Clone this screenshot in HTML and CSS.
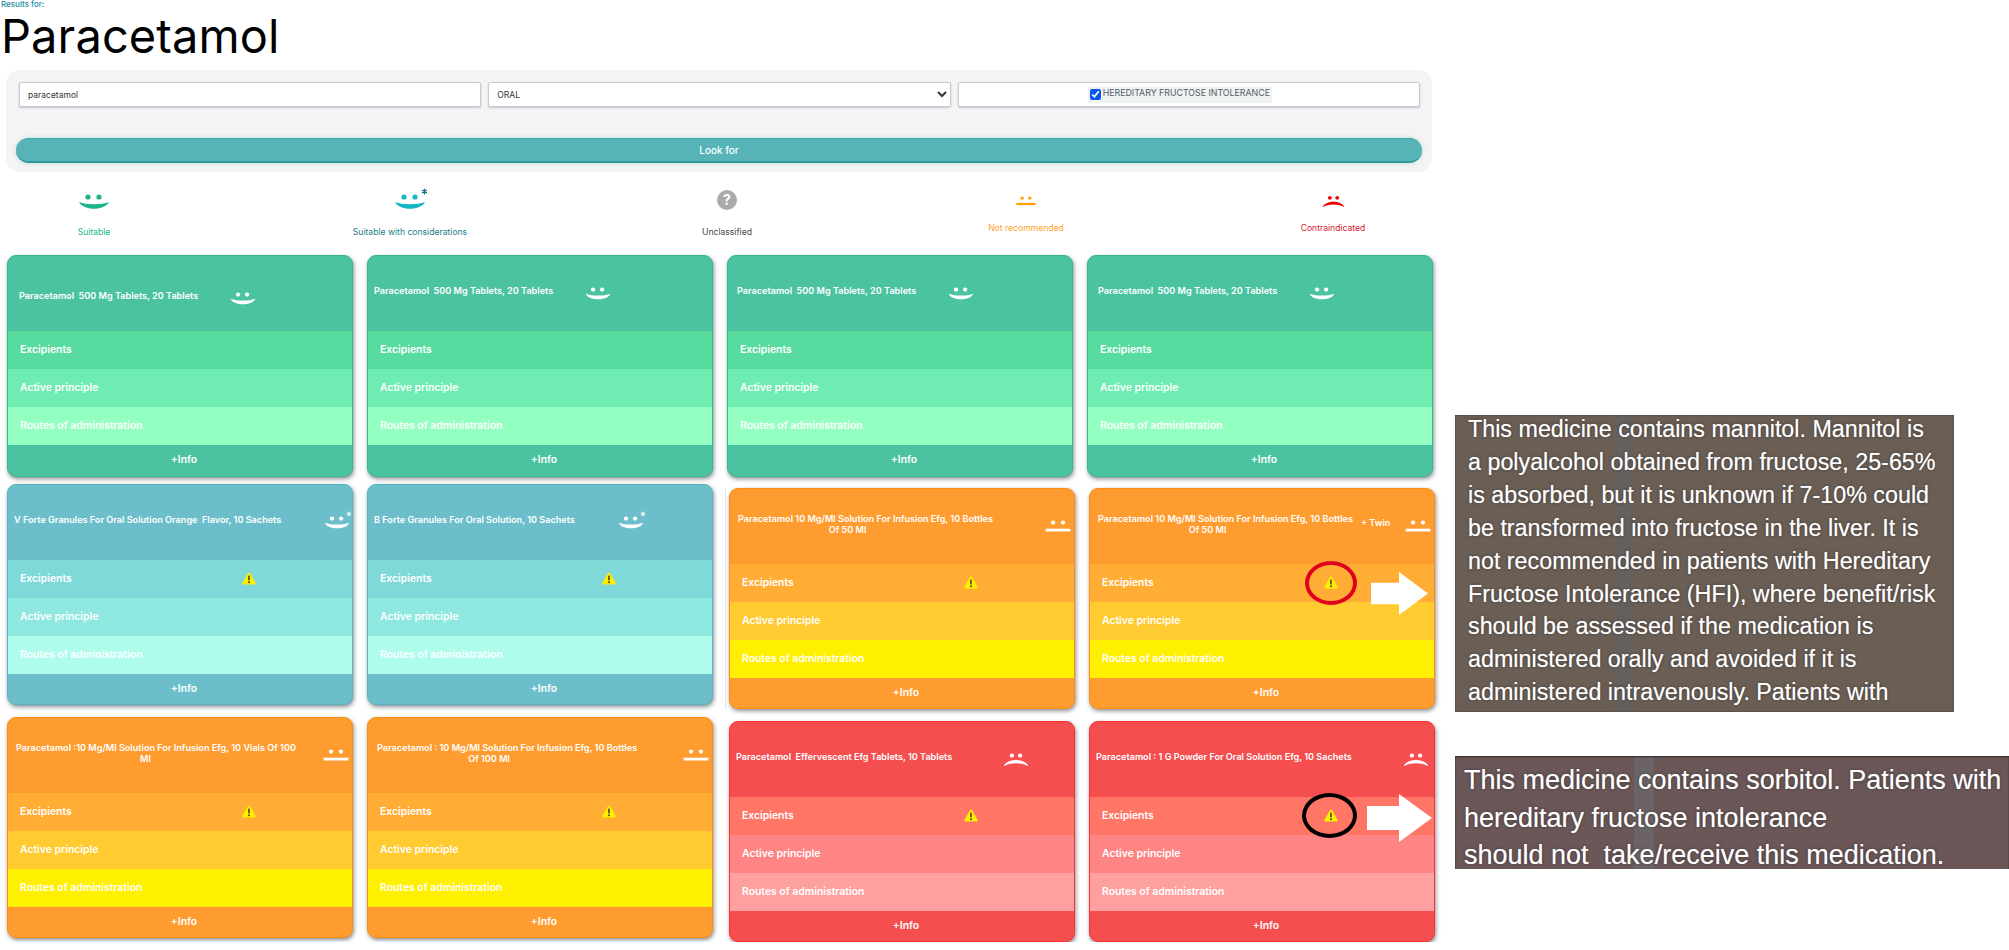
FILE: index.html
```html
<!DOCTYPE html>
<html lang="en">

<head>
    <meta charset="UTF-8">
    <meta name="viewport" content="width=device-width, initial-scale=1.0">
    <title>Results for Paracetamol</title>
    <link rel="stylesheet" href="styles.css">
</head>

<body>
    <svg class="defs" width="0" height="0">
        <symbol id="face-smile" viewBox="-2 -6 34 24">
            <circle cx="9" cy="3" r="2.6" fill="currentColor"/><circle cx="20" cy="3" r="2.6" fill="currentColor"/>
            <path d="M0 8C8 11 22 11 30 8C26 17 4 17 0 8Z" fill="currentColor"/>
        </symbol>
        <symbol id="face-star" viewBox="-2 -6 34 24">
            <circle cx="9" cy="3" r="2.6" fill="currentColor"/><circle cx="20" cy="3" r="2.6" fill="currentColor"/>
            <path d="M0 8C8 11 22 11 30 8C26 17 4 17 0 8Z" fill="currentColor"/>
            <path d="M29.5-5.5V.5M27-4L32-1M27-1L32-4" stroke-width="1.2" class="star"/>
        </symbol>
        <symbol id="face-flat" viewBox="-2 -6 34 24">
            <circle cx="9" cy="3" r="2.6" fill="currentColor"/><circle cx="21" cy="3" r="2.6" fill="currentColor"/>
            <rect x="0" y="10.5" width="30" height="3.4" fill="currentColor"/>
        </symbol>
        <symbol id="face-sad" viewBox="-2 -6 34 24">
            <circle cx="10" cy="3" r="2.6" fill="currentColor"/><circle cx="20" cy="3" r="2.6" fill="currentColor"/>
            <path d="M0 16C4 6 26 6 30 16C22 11 8 11 0 16Z" fill="currentColor"/>
        </symbol>
        <symbol id="warning" viewBox="0 0 14 13">
            <path d="M7 1.6L12.6 11.4H1.4Z" fill="#ffee00" stroke="#ffee00" stroke-width="2.2" stroke-linejoin="round"/>
            <rect x="6.2" y="3.6" width="1.6" height="4.8" fill="#4a4a2a"/><circle cx="7" cy="10.2" r="1" fill="#4a4a2a"/>
        </symbol>
        <symbol id="arrow" viewBox="0 0 65 48" preserveAspectRatio="none">
            <path d="M0 12H32V0L65 24L32 48V36H0Z" fill="#fff"/>
        </symbol>
    </svg>

    <div class="page">
        <main class="content">
            <p class="results-for">Results for:</p>
            <h1>Paracetamol</h1>

            <form class="search">
                <div class="search-fields">
                    <input class="field" type="text" value="paracetamol">
                    <select class="field field-select">
                        <option>ORAL</option>
                    </select>
                    <div class="field field-check">
                        <label class="check-label"><input type="checkbox" checked><span>HEREDITARY FRUCTOSE INTOLERANCE</span></label>
                    </div>
                </div>
                <button class="look-for" type="button">Look for</button>
            </form>

            <div class="legend">
                <div class="legend-item suitable">
                    <svg class="legend-icon"><use href="#face-smile"/></svg>
                    <span>Suitable</span>
                </div>
                <div class="legend-item considerations">
                    <svg class="legend-icon"><use href="#face-star"/></svg>
                    <span>Suitable with considerations</span>
                </div>
                <div class="legend-item unclassified">
                    <div class="legend-icon"><span class="question">?</span></div>
                    <span>Unclassified</span>
                </div>
                <div class="legend-item not-recommended">
                    <svg class="legend-icon"><use href="#face-flat"/></svg>
                    <span>Not recommended</span>
                </div>
                <div class="legend-item contraindicated">
                    <svg class="legend-icon"><use href="#face-sad"/></svg>
                    <span>Contraindicated</span>
                </div>
            </div>

            <div class="results">
                <div class="half half-left">
                    <div class="card-row row-1">
                        <article class="card green">
                            <div class="card-head"><span class="card-title">Paracetamol&nbsp; 500 Mg Tablets, 20 Tablets</span><svg class="face"><use href="#face-smile"/></svg></div>
                            <div class="card-line line-a">Excipients</div>
                            <div class="card-line line-b">Active principle</div>
                            <div class="card-line line-c">Routes of administration</div>
                            <div class="card-foot">+Info</div>
                        </article>
                        <article class="card green">
                            <div class="card-head"><span class="card-title">Paracetamol&nbsp; 500 Mg Tablets, 20 Tablets</span><svg class="face"><use href="#face-smile"/></svg></div>
                            <div class="card-line line-a">Excipients</div>
                            <div class="card-line line-b">Active principle</div>
                            <div class="card-line line-c">Routes of administration</div>
                            <div class="card-foot">+Info</div>
                        </article>
                    </div>
                    <div class="card-row row-2">
                        <article class="card blue">
                            <div class="card-head"><span class="card-title">V Forte Granules For Oral Solution Orange&nbsp; Flavor, 10 Sachets</span><svg class="face"><use href="#face-star"/></svg></div>
                            <div class="card-line line-a">Excipients<span class="warn"><svg class="warn-icon"><use href="#warning"/></svg></span></div>
                            <div class="card-line line-b">Active principle</div>
                            <div class="card-line line-c">Routes of administration</div>
                            <div class="card-foot">+Info</div>
                        </article>
                        <article class="card blue">
                            <div class="card-head"><span class="card-title">B Forte Granules For Oral Solution, 10 Sachets</span><svg class="face"><use href="#face-star"/></svg></div>
                            <div class="card-line line-a">Excipients<span class="warn"><svg class="warn-icon"><use href="#warning"/></svg></span></div>
                            <div class="card-line line-b">Active principle</div>
                            <div class="card-line line-c">Routes of administration</div>
                            <div class="card-foot">+Info</div>
                        </article>
                    </div>
                    <div class="card-row row-3">
                        <article class="card orange">
                            <div class="card-head"><span class="card-title">Paracetamol :10 Mg/Ml Solution For Infusion Efg, 10 Vials Of 100<span class="second-line short">Ml</span></span><svg class="face"><use href="#face-flat"/></svg></div>
                            <div class="card-line line-a">Excipients<span class="warn"><svg class="warn-icon"><use href="#warning"/></svg></span></div>
                            <div class="card-line line-b">Active principle</div>
                            <div class="card-line line-c">Routes of administration</div>
                            <div class="card-foot">+Info</div>
                        </article>
                        <article class="card orange">
                            <div class="card-head"><span class="card-title">Paracetamol : 10 Mg/Ml Solution For Infusion Efg, 10 Bottles<span class="second-line">Of 100 Ml</span></span><svg class="face"><use href="#face-flat"/></svg></div>
                            <div class="card-line line-a">Excipients<span class="warn"><svg class="warn-icon"><use href="#warning"/></svg></span></div>
                            <div class="card-line line-b">Active principle</div>
                            <div class="card-line line-c">Routes of administration</div>
                            <div class="card-foot">+Info</div>
                        </article>
                    </div>
                </div>

                <div class="half half-right">
                    <div class="card-row row-1">
                        <article class="card green">
                            <div class="card-head"><span class="card-title">Paracetamol&nbsp; 500 Mg Tablets, 20 Tablets</span><svg class="face"><use href="#face-smile"/></svg></div>
                            <div class="card-line line-a">Excipients</div>
                            <div class="card-line line-b">Active principle</div>
                            <div class="card-line line-c">Routes of administration</div>
                            <div class="card-foot">+Info</div>
                        </article>
                        <article class="card green">
                            <div class="card-head"><span class="card-title">Paracetamol&nbsp; 500 Mg Tablets, 20 Tablets</span><svg class="face"><use href="#face-smile"/></svg></div>
                            <div class="card-line line-a">Excipients</div>
                            <div class="card-line line-b">Active principle</div>
                            <div class="card-line line-c">Routes of administration</div>
                            <div class="card-foot">+Info</div>
                        </article>
                    </div>
                    <div class="card-row row-2">
                        <article class="card orange">
                            <div class="card-head"><span class="card-title">Paracetamol 10 Mg/Ml Solution For Infusion Efg, 10 Bottles<span class="second-line">Of 50 Ml</span></span><svg class="face"><use href="#face-flat"/></svg></div>
                            <div class="card-line line-a">Excipients<span class="warn"><svg class="warn-icon"><use href="#warning"/></svg></span></div>
                            <div class="card-line line-b">Active principle</div>
                            <div class="card-line line-c">Routes of administration</div>
                            <div class="card-foot">+Info</div>
                        </article>
                        <article class="card orange">
                            <div class="card-head"><span class="card-title">Paracetamol 10 Mg/Ml Solution For Infusion Efg, 10 Bottles<span class="second-line">Of 50 Ml</span></span><span class="twin">+ Twin</span><svg class="face"><use href="#face-flat"/></svg></div>
                            <div class="card-line line-a">Excipients<span class="warn"><svg class="warn-icon"><use href="#warning"/></svg><span class="ring ring-red"></span></span><svg class="callout callout-orange"><use href="#arrow"/></svg></div>
                            <div class="card-line line-b">Active principle</div>
                            <div class="card-line line-c">Routes of administration</div>
                            <div class="card-foot">+Info</div>
                        </article>
                    </div>
                    <div class="card-row row-3">
                        <article class="card red">
                            <div class="card-head"><span class="card-title">Paracetamol&nbsp; Effervescent Efg Tablets, 10 Tablets</span><svg class="face"><use href="#face-sad"/></svg></div>
                            <div class="card-line line-a">Excipients<span class="warn"><svg class="warn-icon"><use href="#warning"/></svg></span></div>
                            <div class="card-line line-b">Active principle</div>
                            <div class="card-line line-c">Routes of administration</div>
                            <div class="card-foot">+Info</div>
                        </article>
                        <article class="card red">
                            <div class="card-head"><span class="card-title">Paracetamol : 1 G Powder For Oral Solution Efg, 10 Sachets</span><svg class="face"><use href="#face-sad"/></svg></div>
                            <div class="card-line line-a">Excipients<span class="warn"><svg class="warn-icon"><use href="#warning"/></svg><span class="ring ring-black"></span></span><svg class="callout callout-red"><use href="#arrow"/></svg></div>
                            <div class="card-line line-b">Active principle</div>
                            <div class="card-line line-c">Routes of administration</div>
                            <div class="card-foot">+Info</div>
                        </article>
                    </div>
                </div>
            </div>
        </main>

        <aside class="notes">
            <div class="note note-mannitol">
                <p>This medicine contains mannitol. Mannitol is<br>a polyalcohol obtained from fructose, 25-65%<br>is absorbed, but it is unknown if 7-10% could<br>be transformed into fructose in the liver. It is<br>not recommended in patients with Hereditary<br>Fructose Intolerance (HFI), where benefit/risk<br>should be assessed if the medication is<br>administered orally and avoided if it is<br>administered intravenously. Patients with</p>
            </div>
            <div class="note note-sorbitol">
                <p>This medicine contains sorbitol. Patients with<br>hereditary fructose intolerance<br>should not&nbsp; take/receive this medication.</p>
            </div>
        </aside>
    </div>
</body>

</html>
```

FILE: styles.css
```css
body {
    margin: 0;
    padding: 0;
    font-family: "Inter", "Liberation Sans", sans-serif;
    background: #fff;
    overflow: hidden;
}

.defs {
    position: absolute;
}

.page {
    display: flex;
}

.content {
    width: 1440px;
    flex: none;
}

.results-for {
    margin: 0;
    padding-left: 1px;
    font-size: 8px;
    line-height: 9px;
    font-weight: 500;
    color: #178fa0;
}

h1 {
    margin: 4px 0 0 1px;
    font-size: 47px;
    line-height: 46px;
    font-weight: 400;
    color: #000;
    letter-spacing: 0.1px;
}

/* search */
.search {
    margin: 11px 0 0 6px;
    width: 1426px;
    height: 102px;
    box-sizing: border-box;
    padding: 12px 10px 0;
    background: #f4f4f4;
    border-radius: 14px;
}

.search-fields {
    display: grid;
    grid-template-columns: repeat(3, 1fr);
    gap: 7px;
    padding: 0 2px 0 3px;
}

.field {
    min-width: 0;
    height: 25px;
    box-sizing: border-box;
    padding: 0 8px;
    border: 1px solid #c3ccd6;
    border-radius: 2px;
    background: #fff;
    box-shadow: 0 1px 2px rgba(120, 130, 150, 0.4);
    font-family: inherit;
    font-size: 8.5px;
    color: #333;
}

.field-select {
    padding: 0 4px;
}

.field-check {
    display: flex;
    justify-content: center;
    padding: 0 18px 0 0;
}

.check-label {
    display: flex;
    align-items: flex-start;
    gap: 2px;
    height: 16px;
    margin-top: 4px;
    padding: 0 2px;
    background: #eff2f2;
    font-size: 8.8px;
    line-height: 11px;
    color: #555b66;
}

.check-label input {
    width: 11px;
    height: 11px;
    margin: 2px 0 0;
    accent-color: #0a55f0;
}

.look-for {
    display: block;
    width: 100%;
    height: 25px;
    margin-top: 31px;
    border: 0;
    border-bottom: 2px solid #2f9c9e;
    border-top: 1px solid #3ea7a8;
    border-radius: 13px;
    background: #56b4b6;
    color: #fff;
    font-family: inherit;
    font-size: 10px;
    font-weight: 500;
    box-shadow: 0 0 4px rgba(90, 180, 180, 0.4);
}

/* legend */
.legend {
    display: grid;
    grid-template-columns: 188px 444px 190px 408px 206px;
    padding-top: 16px;
    height: 67px;
    box-sizing: content-box;
    font-size: 8.6px;
    line-height: 12px;
    text-align: center;
}

.legend-item {
    display: flex;
    flex-direction: column;
    align-items: center;
}

.legend-icon {
    display: block;
    width: 34px;
    height: 24px;
    margin-bottom: 14px;
}

.star {
    stroke: var(--star, currentColor);
}

.suitable {
    color: #20b48c;
}

.considerations {
    color: #177c8c;
}

.considerations .legend-icon {
    color: #16b6c6;
    --star: #14707f;
}

.unclassified {
    color: #40464c;
}

.question {
    display: block;
    width: 20px;
    height: 20px;
    margin: 2px auto 0;
    border-radius: 50%;
    background: #aaa;
    color: #fff;
    font-size: 14px;
    line-height: 20px;
    font-weight: 700;
}

.not-recommended {
    color: #ffa21f;
}

.not-recommended .legend-icon {
    width: 22px;
    margin-bottom: 10px;
    color: #ffa000;
}

.contraindicated {
    color: #d6202e;
}

.contraindicated .legend-icon {
    width: 25px;
    margin-bottom: 10px;
    color: #f00000;
}

/* cards */
.results {
    display: flex;
}

.half {
    display: flex;
    flex-direction: column;
}

.half-left {
    width: 725px;
    flex: none;
    padding-left: 7px;
    box-sizing: border-box;
}

.card-row {
    display: flex;
    gap: 14px;
}

.half-left .row-2 {
    margin-top: 7px;
}

.half-left .row-3 {
    margin-top: 12px;
}

.half-right .row-1 {
    padding-left: 2px;
}

.half-right .row-2 {
    margin-top: 11px;
    padding-left: 3px;
    border-left: 1px solid #e2e6ea;
}

.half-right .row-3 {
    margin-top: 12px;
    padding-left: 4px;
}

.card {
    width: 346px;
    height: 222px;
    box-sizing: border-box;
    border: 1px solid;
    border-radius: 9px;
    overflow: hidden;
    color: #fff;
    font-weight: 600;
    box-shadow: 1px 2px 4px rgba(40, 50, 60, 0.55);
}

.row-2 .card,
.row-3 .card {
    height: 221px;
}

.card-head {
    display: flex;
    align-items: center;
    height: 75px;
    box-sizing: border-box;
    padding: 0 0 4px 6px;
}

.card-title {
    display: block;
    font-size: 9.1px;
    line-height: 10.5px;
    text-align: center;
    white-space: nowrap;
}

.second-line {
    display: block;
    padding-right: 36px;
}

.second-line.short {
    padding-right: 21px;
}

.twin {
    margin: -4px 0 0 8px;
    font-size: 9.1px;
    white-space: nowrap;
}

.face {
    flex: none;
    width: 28px;
    height: 20px;
}

.card-line {
    display: grid;
    grid-template-columns: 222px 14px;
    align-items: center;
    position: relative;
    height: 38px;
    box-sizing: border-box;
    padding: 0 0 1px 12px;
    font-size: 10.4px;
}

/* ring and arrow on this line run over the next one */
.line-a {
    z-index: 1;
}

.card-foot {
    height: 31px;
    padding-left: 8px;
    font-size: 10.4px;
    line-height: 30px;
    text-align: center;
}

.warn {
    position: relative;
    display: block;
    width: 14px;
    height: 13px;
}

.warn-icon {
    display: block;
    width: 14px;
    height: 13px;
}

.ring {
    position: absolute;
    border: 4px solid;
    border-radius: 50%;
    box-sizing: border-box;
}

.ring-red {
    left: -19px;
    top: -15px;
    width: 52px;
    height: 44px;
    border-color: #e0001f;
}

.ring-black {
    left: -22px;
    top: -16px;
    width: 55px;
    height: 45px;
    border-color: #000;
}

.callout {
    position: absolute;
}

.callout-orange {
    left: 281px;
    top: 8px;
    width: 57px;
    height: 43px;
}

.callout-red {
    left: 277px;
    top: -3px;
    width: 65px;
    height: 48px;
}

.green {
    background: #4cc3a0;
    border-color: #35b78f;
}

.green .face {
    margin-left: 31px;
}

.green .line-a {
    background: #58db9e;
}

.green .line-b {
    background: #6eecb2;
}

.green .line-c {
    background: #93ffc0;
}

.blue {
    background: #6cbfca;
    border-color: #58b4c0;
}

.blue .face {
    margin-left: 42px;
}

.blue .line-a {
    background: #7fd9d9;
}

.blue .line-b {
    background: #8ee8df;
}

.blue .line-c {
    background: #aefcec;
}

.orange {
    background: #ff9c30;
    border-color: #ff8c10;
}

.orange .face {
    margin-left: auto;
    margin-right: 2px;
}

.orange .line-a {
    background: #ffad35;
}

.orange .line-b {
    background: #ffcb30;
}

.orange .line-c {
    background: #fff000;
}

.red {
    background: #f44e4f;
    border-color: #ff3030;
}

.red .face {
    margin-left: 50px;
}

.red .line-a {
    background: #ff7566;
}

.red .line-b {
    background: #ff8585;
}

.red .line-c {
    background: #ffa0a0;
}

/* the first row sits a little differently in each card */
.half-left .row-1 .card:nth-child(1) .card-head {
    padding: 6px 0 0 11px;
}

.half-right .row-1 .card:nth-child(1) .card-head {
    padding-left: 9px;
}

.half-right .row-1 .card:nth-child(2) .card-head {
    padding-left: 10px;
}

.half-right .row-2 .card-head {
    padding-left: 8px;
}

.half-left .row-3 .card:nth-child(1) .card-head {
    padding-left: 8px;
}

.half-left .row-3 .card:nth-child(2) .card-head {
    padding-left: 9px;
}

/* notes */
.notes {
    flex: 1;
    min-width: 0;
    display: flex;
    flex-direction: column;
    align-items: flex-start;
    padding: 415px 0 0 15px;
    gap: 44px;
    font-family: "Liberation Sans", Arial, sans-serif;
    color: #fff;
}

.note {
    box-sizing: border-box;
    white-space: nowrap;
    text-shadow: 0 0 1px rgba(255, 255, 255, 0.5), 0 0 3px rgba(0, 0, 0, 0.6);
}

.note p {
    margin: 0;
}

.note-mannitol {
    width: 499px;
    height: 297px;
    padding-left: 13px;
    font-size: 23.3px;
    line-height: 32.9px;
    background: linear-gradient(90deg, transparent 159px, #65605e 159px, #65605e 178px, transparent 178px), #6b5f55;
    box-shadow: inset 0 0 2px rgba(40, 35, 30, 0.7);
}

.note-mannitol p {
    margin-top: -2px;
}

.note-sorbitol {
    width: 554px;
    height: 113px;
    padding: 6px 0 0 9px;
    font-size: 27px;
    line-height: 37.5px;
    background: linear-gradient(90deg, transparent 179px, #6a6466 179px, #6a6466 199px, transparent 199px), #6b5758;
    box-shadow: inset 0 1px 2px rgba(40, 30, 30, 0.8);
}

.note-sorbitol p {
    height: 107px;
    overflow: visible;
}
```
